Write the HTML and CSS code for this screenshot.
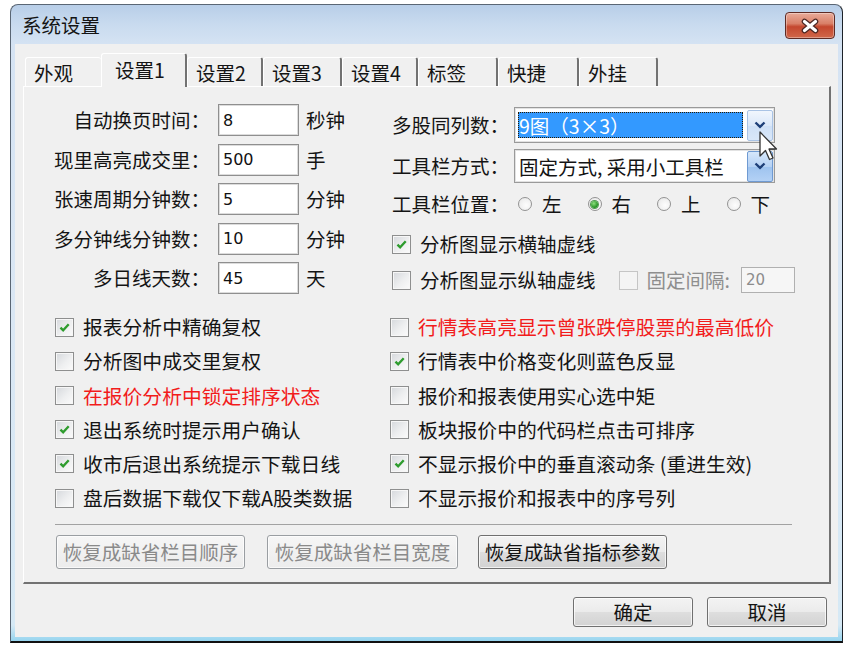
FILE: index.html
```html
<!DOCTYPE html>
<html lang="zh-CN">
<head>
<meta charset="utf-8">
<title>系统设置</title>
<link rel="stylesheet" href="styles.css">
</head>
<body>
<div class="window">
  <div class="titlebar">
    <span class="title">系统设置</span>
    <span class="close" aria-label="关闭">
      <svg width="20" height="16" viewBox="0 0 20 16"><path d="M4.5 3.5l11 9M15.5 3.5l-11 9" stroke="#4b2623" stroke-width="5.6" stroke-linecap="round"/><path d="M4.5 3.5l11 9M15.5 3.5l-11 9" stroke="#fff" stroke-width="3.2" stroke-linecap="round"/></svg>
    </span>
  </div>
  <div class="client">
    <div class="tabs">
      <div class="tab tab-a before-active">外观</div>
      <div class="tab tab-b active">设置1</div>
      <div class="tab tab-c">设置2</div>
      <div class="tab tab-d">设置3</div>
      <div class="tab tab-e">设置4</div>
      <div class="tab tab-f">标签</div>
      <div class="tab tab-g">快捷</div>
      <div class="tab tab-h">外挂</div>
    </div>
    <div class="panel">
      <div class="top">
        <div class="form-left">
          <span class="lbl">自动换页时间：</span><span class="input">8</span><span class="unit">秒钟</span>
          <span class="lbl">现里高亮成交里：</span><span class="input">500</span><span class="unit">手</span>
          <span class="lbl">张速周期分钟数：</span><span class="input">5</span><span class="unit">分钟</span>
          <span class="lbl">多分钟线分钟数：</span><span class="input">10</span><span class="unit">分钟</span>
          <span class="lbl">多日线天数：</span><span class="input">45</span><span class="unit">天</span>
        </div>
        <div class="form-right">
          <div class="frow frow-1">
            <span class="lbl2">多股同列数：</span>
            <span class="select">
              <span class="sel-text hl">9图（3×3）</span>
              <span class="sel-btn"><svg width="12" height="8" viewBox="0 0 12 8"><path d="M1.5 1.5l4.5 4.3 4.5-4.3" stroke="#1e3f78" stroke-width="2.4" fill="none"/></svg></span>
            </span>
            <svg class="cursor" width="20" height="30" viewBox="0 0 20 30"><path d="M1 1L1 25L6.5 19.5L10.5 28.5L14 27L10 18L17.5 18Z" fill="#fff" stroke="#333" stroke-width="1.3" stroke-linejoin="round"/></svg>
          </div>
          <div class="frow frow-2">
            <span class="lbl2">工具栏方式：</span>
            <span class="select select-2">
              <span class="sel-text">固定方式, 采用小工具栏</span>
              <span class="sel-btn sel-btn-hot"><svg width="12" height="8" viewBox="0 0 12 8"><path d="M1.5 1.5l4.5 4.3 4.5-4.3" stroke="#1e3f78" stroke-width="2.4" fill="none"/></svg></span>
            </span>
          </div>
          <div class="frow frow-3">
            <span class="lbl2">工具栏位置：</span>
            <span class="radios">
              <span class="radio-item"><span class="radio"></span>左</span>
              <span class="radio-item"><span class="radio on"></span>右</span>
              <span class="radio-item"><span class="radio"></span>上</span>
              <span class="radio-item"><span class="radio"></span>下</span>
            </span>
          </div>
          <div class="frow frow-4">
            <span class="check"><span class="box"><svg viewBox="0 0 19 19"><path d="M5 9.6l3 3.1 6.2-6.8" fill="none" stroke="#2e9c2e" stroke-width="2.6"/></svg></span>分析图显示横轴虚线</span>
          </div>
          <div class="frow frow-5">
            <span class="check"><span class="box"></span>分析图显示纵轴虚线</span>
            <span class="check disabled gap-left"><span class="box"></span>固定间隔:</span>
            <span class="input input-small">20</span>
          </div>
        </div>
      </div>
      <div class="checks">
        <span class="check"><span class="box"><svg viewBox="0 0 19 19"><path d="M5 9.6l3 3.1 6.2-6.8" fill="none" stroke="#2e9c2e" stroke-width="2.6"/></svg></span>报表分析中精确复权</span>
        <span class="check red"><span class="box"></span>行情表高亮显示曾张跌停股票的最高低价</span>
        <span class="check"><span class="box"></span>分析图中成交里复权</span>
        <span class="check"><span class="box"><svg viewBox="0 0 19 19"><path d="M5 9.6l3 3.1 6.2-6.8" fill="none" stroke="#2e9c2e" stroke-width="2.6"/></svg></span>行情表中价格变化则蓝色反显</span>
        <span class="check red"><span class="box"></span>在报价分析中锁定排序状态</span>
        <span class="check"><span class="box"></span>报价和报表使用实心选中矩</span>
        <span class="check"><span class="box"><svg viewBox="0 0 19 19"><path d="M5 9.6l3 3.1 6.2-6.8" fill="none" stroke="#2e9c2e" stroke-width="2.6"/></svg></span>退出系统时提示用户确认</span>
        <span class="check"><span class="box"></span>板块报价中的代码栏点击可排序</span>
        <span class="check"><span class="box"><svg viewBox="0 0 19 19"><path d="M5 9.6l3 3.1 6.2-6.8" fill="none" stroke="#2e9c2e" stroke-width="2.6"/></svg></span>收市后退出系统提示下载日线</span>
        <span class="check"><span class="box"><svg viewBox="0 0 19 19"><path d="M5 9.6l3 3.1 6.2-6.8" fill="none" stroke="#2e9c2e" stroke-width="2.6"/></svg></span>不显示报价中的垂直滚动条 (重进生效)</span>
        <span class="check"><span class="box"></span>盘后数据下载仅下载A股类数据</span>
        <span class="check"><span class="box"></span>不显示报价和报表中的序号列</span>
      </div>
      <div class="sep"></div>
      <div class="btnrow">
        <button class="btn btn-wide disabled" disabled>恢复成缺省栏目顺序</button>
        <button class="btn btn-wide btn-mid disabled" disabled>恢复成缺省栏目宽度</button>
        <button class="btn btn-wide">恢复成缺省指标参数</button>
      </div>
    </div>
    <div class="footer">
      <button class="btn btn-foot">确定</button>
      <button class="btn btn-foot">取消</button>
    </div>
  </div>
</div>
</body>
</html>
```
FILE: styles.css
```css
* { box-sizing: border-box; }
html, body { margin: 0; padding: 0; background: #fff; }
body {
  font-family: "Noto Sans CJK SC", "Noto Sans", sans-serif;
  font-size: 19.5px;
  line-height: 1;
  color: #141414;
}

.window {
  position: relative;
  margin: 4px 0 0 10px;
  width: 833px;
  height: 639px;
  border: 1px solid #5a6674;
  border-right-color: #1d2228;
  border-bottom: 2px solid #111;
  border-radius: 8px 8px 0 0;
  padding: 0 4px 4px;
  background: linear-gradient(to bottom, #b8cee8 0, #c9dbef 20px, #d5e3f3 40px, #dae7f4 300px, #d6e9f5 620px, #97d5ef 100%);
}

.titlebar {
  height: 39px;
  display: flex;
  justify-content: space-between;
  align-items: flex-start;
}
.title { margin: 10px 0 0 7px; }
.close {
  margin: 7px 3px 0 0;
  width: 50px;
  height: 27px;
  border: 1px solid #5e2b25;
  border-radius: 4px;
  background: linear-gradient(to bottom, #e9ab9a 0%, #d98068 42%, #c4472e 55%, #d0674a 100%);
  box-shadow: inset 0 0 0 1px rgba(255,255,255,0.35);
  display: flex;
  align-items: center;
  justify-content: center;
}

.client {
  height: 593px;
  background: #f0f0f0;
  padding: 0 7px 0 8px;
  display: flex;
  flex-direction: column;
}

.tabs {
  height: 42px;
  padding-left: 2px;
  display: flex;
  align-items: flex-end;
}
.tab {
  height: 29px;
  display: flex;
  align-items: center;
  padding: 1px 0 0 8px;
  border-top: 1px solid #fff;
  border-left: 1px solid #fff;
  border-right: 2px solid #727272;
  border-radius: 3px 3px 0 0;
  background: #f0f0f0;
}
.tab.before-active { border-right: 0; }
.tab.active {
  height: 34px;
  margin-bottom: -1px;
  padding: 0 0 2px 13px;
  position: relative;
  z-index: 1;
}
.tab-a { width: 76px; }
.tab-b { width: 86px; }
.tab-c { width: 76px; }
.tab-d { width: 79px; }
.tab-e { width: 76px; }
.tab-f { width: 80px; }
.tab-g { width: 81px; }
.tab-h { width: 79px; }

.panel {
  height: 498px;
  border-top: 1px solid #fff;
  border-left: 1px solid #fff;
  border-right: 2px solid #727272;
  border-bottom: 2px solid #727272;
  padding: 17px 0 0 31px;
}

.top { display: flex; }
.form-left {
  width: 337px;
  display: grid;
  grid-template-columns: 155px 81px 1fr;
  grid-auto-rows: 32px;
  column-gap: 8px;
  row-gap: 7.5px;
  align-items: center;
}
.lbl { justify-self: end; white-space: nowrap; }
.unit { margin-left: -1px; }

.input {
  height: 32px;
  border: 1px solid #8f8f8f;
  box-shadow: inset 0 0 0 1px #dcdcdc;
  background: #fff;
  font-family: "DejaVu Sans", "Liberation Sans", sans-serif;
  font-size: 16px;
  display: flex;
  align-items: center;
  padding: 1px 0 0 4px;
  color: #111;
}
.input-small {
  width: 54px;
  height: 26px;
  margin-left: 11px;
  font-size: 15px;
  color: #8c8c8c;
  background: #f6f6f6;
  border-color: #b0b0b0;
  box-shadow: none;
}

.form-right {
  flex: 1;
  display: flex;
  flex-direction: column;
}
.frow {
  display: flex;
  align-items: center;
  height: 30px;
  margin-top: 6px;
  white-space: nowrap;
}
.frow-1 { height: 36px; margin-top: 3px; position: relative; }
.frow-2 { height: 34px; }
.frow-4 { margin-top: 10px; }
.lbl2 { width: 122px; flex: none; }

.select {
  width: 261px;
  height: 100%;
  border: 1px solid #9a9a9a;
  box-shadow: inset 0 0 0 1px #e2e2e2;
  background: #fff;
  display: flex;
  align-items: center;
  padding-right: 1px;
}
.sel-text {
  flex: 1;
  height: 26px;
  margin: 0 4px 0 3px;
  padding: 1px 0 0 1px;
  display: flex;
  align-items: center;
}
.sel-text.hl {
  background: #3399ff;
  color: #fff;
  border: 1px dotted #2a1a00;
  padding-left: 0;
}
.sel-btn {
  width: 26px;
  height: 31px;
  border: 1px solid #a9c3e5;
  border-radius: 2px;
  background: linear-gradient(to bottom, #f1f6fd, #dbe8f9 50%, #cfe0f6 51%, #d9e7f9);
  display: flex;
  align-items: center;
  justify-content: center;
}
.sel-btn-hot {
  border-color: #6f9ad2;
  background: linear-gradient(to bottom, #d6e7fb, #b6d2f4 50%, #9ec3ef 51%, #b3d1f5);
}
.cursor {
  position: absolute;
  left: 367px;
  top: 24px;
}

.radios { display: flex; gap: 26px; margin-left: 4px; }
.radio-item { display: flex; align-items: center; }
.radio {
  width: 14px;
  height: 14px;
  border: 1px solid #939393;
  border-radius: 50%;
  background: radial-gradient(circle at 60% 60%, #fdfdfd, #e6e6e6);
  margin-right: 10px;
  display: flex;
  align-items: center;
  justify-content: center;
}
.radio.on::after {
  content: "";
  width: 7px;
  height: 7px;
  border-radius: 50%;
  background: radial-gradient(circle at 40% 35%, #8de07f, #1f8e1f 70%);
  box-shadow: 0 0 0 1px #4f9a4f;
}

.check {
  display: flex;
  align-items: center;
  white-space: nowrap;
}
.box {
  width: 19px;
  height: 19px;
  flex: none;
  border: 1px solid #8e8f8f;
  background: linear-gradient(135deg, #d5d8dc 0%, #eeeff0 55%, #fbfbfb 100%);
  box-shadow: inset 0 0 0 1px #f7f7f7;
  margin-right: 9px;
  display: flex;
}
.box svg { width: 100%; height: 100%; }
.check.red { color: #f21c1c; }
.check.disabled { color: #8e8e8e; }
.check.disabled .box { border-color: #c5c5c5; background: #f4f4f4; box-shadow: none; }
.gap-left { margin-left: 23px; }

.checks {
  margin-top: 15px;
  display: grid;
  grid-template-columns: 335px 1fr;
  grid-auto-rows: 34.2px;
  align-items: center;
  font-size: 19.8px;
}

.sep {
  width: 737px;
  height: 1px;
  margin-top: 9px;
  background: #a2a2a2;
}

.btnrow {
  display: flex;
  margin: 10px 0 0 1px;
  gap: 22px;
}
.btn {
  font: inherit;
  color: #141414;
  height: 34px;
  padding: 0;
  border: 1px solid #707070;
  border-radius: 3px;
  background: linear-gradient(to bottom, #f3f3f3, #ebebeb 50%, #dedede 51%, #d2d2d2);
  box-shadow: inset 0 0 0 1px rgba(255,255,255,0.7);
  display: flex;
  align-items: center;
  justify-content: center;
}
.btn-wide { width: 189px; }
.btn-mid { width: 191px; margin-right: -2px; }
.btn.disabled {
  color: #8a8a8a;
  border-color: #9a9ea2;
  background: linear-gradient(to bottom, #f6f6f6, #ececec);
}

.footer {
  display: flex;
  justify-content: flex-end;
  gap: 14px;
  margin-top: 13px;
  padding-right: 4px;
}
.btn-foot { width: 120px; height: 30px; }
```
